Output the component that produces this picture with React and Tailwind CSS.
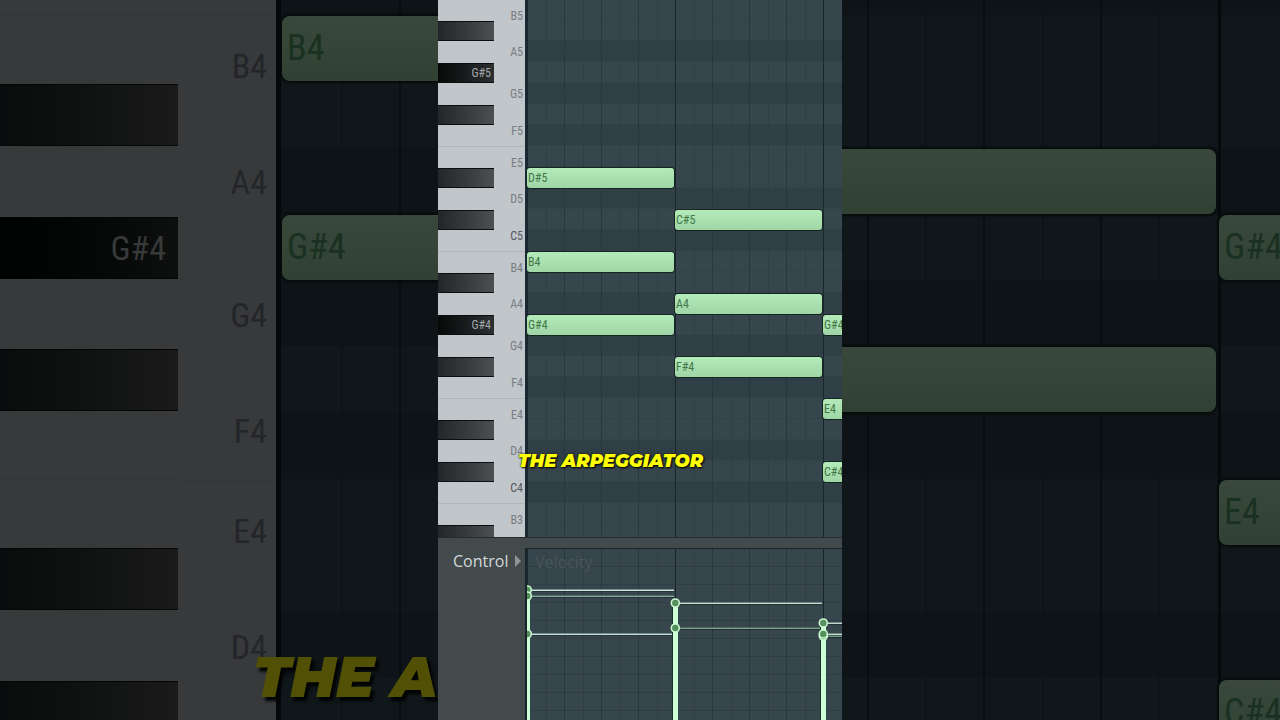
import React from "react";

const LABEL = "font-['Roboto_Condensed','Liberation_Sans_Narrow',Roboto,sans-serif]";
const CAPTION = "font-['Montserrat',Inter,sans-serif] font-black italic whitespace-nowrap";

const PITCHES = ["B", "A#", "A", "G#", "G", "F#", "F", "E", "D#", "D", "C#", "C"];

// Pitch names from the highest one down.
function pitches(firstOctave, start, count) {
  return Array.from({ length: count }, (_, i) => {
    const n = start + i;
    return PITCHES[n % 12] + (firstOctave - Math.floor(n / 12));
  });
}

const ROLL = pitches(5, 0, 26);
const NATURALS = ROLL.filter((p) => !p.includes("#"));
const LARGE = pitches(4, 0, 11);

const isDark = (p) => /^[AGFDC]\d/.test(p);
const isSeam = (p) => /^[BE]\d/.test(p);

const naturalHeight = {
  B: "h-[32px]", A: "h-[42px]", G: "h-[42px]", F: "h-[31px]",
  E: "h-[32px]", D: "h-[42px]", C: "h-[31px]",
};

function BlackKeys() {
  return (
    <div className="w-14 bg-[#c1c6cb]">
      {ROLL.map((p, i) => (
        <div key={p} className={`pt-px ${i === 0 ? "h-[20px]" : "h-[21px]"} ${isSeam(p) && i ? "border-t border-[#b0b6ba]" : ""}`}>
          {p.includes("#") && (
            <button
              aria-label={p}
              className={`block h-[20px] w-full border-y border-[#0c0e0f] pr-[3px] text-right text-[12px] leading-[18px] text-[#a3a7a9] ${
                p.startsWith("G") ? "bg-linear-to-r from-[#070909] to-[#2d3031]" : "bg-linear-to-r from-[#232628] to-[#4d5052]"
              }`}
            >
              {p.startsWith("G") ? p : ""}
            </button>
          )}
        </div>
      ))}
    </div>
  );
}

function WhiteKeys() {
  return (
    <div className="w-[31px] bg-[#c1c6cb]">
      {NATURALS.map((p, i) => (
        <button
          key={p}
          className={`flex w-full items-center justify-end pr-[2px] text-[12px] leading-none ${i === 0 ? "h-[31px]" : naturalHeight[p[0]]} ${
            isSeam(p) && i ? "border-t border-[#b0b6ba]" : ""
          } ${p[0] === "C" ? "text-[#54595d]" : "text-[#777d81]"}`}
        >
          {p}
        </button>
      ))}
    </div>
  );
}

function Bars() {
  return (
    <div className="absolute inset-0 flex overflow-hidden">
      {[0, 1, 2].map((bar) => (
        <div key={bar} className="grid w-[148px] shrink-0 grid-cols-8">
          {Array.from({ length: 8 }, (_, i) => (
            <span
              key={i}
              className={i === 0 ? "border-l border-[#1a262d]" : i % 2 ? "border-l border-[#313e46]" : "border-l border-[#28363e]"}
            />
          ))}
        </div>
      ))}
    </div>
  );
}

const NOTES = [
  { name: "D#5", place: "left-0 top-[168px]" },
  { name: "B4", place: "left-0 top-[252px]" },
  { name: "G#4", place: "left-0 top-[315px]" },
  { name: "C#5", place: "left-[148px] top-[210px]" },
  { name: "A4", place: "left-[148px] top-[294px]" },
  { name: "F#4", place: "left-[148px] top-[357px]" },
  { name: "G#4", place: "left-[296px] top-[315px]" },
  { name: "E4", place: "left-[296px] top-[399px]" },
  { name: "C#4", place: "left-[296px] top-[462px]" },
];

function PianoRoll() {
  return (
    <section aria-label="Piano roll" className={`flex h-[537px] shrink-0 overflow-hidden ${LABEL}`}>
      <BlackKeys />
      <WhiteKeys />
      <div className="relative flex-1 overflow-hidden border-l-2 border-[#1a2a31]">
        {ROLL.map((p, i) => (
          <div
            key={p}
            className={`${i === 0 ? "h-[20px]" : "h-[21px]"} ${isDark(p) ? "bg-[#303e46]" : "bg-[#37454d]"} border-b border-[#334149]`}
          />
        ))}
        <Bars />
        {NOTES.map((n) => (
          <div
            key={n.name + n.place}
            className={`absolute h-[20px] w-[147px] rounded-[3px] bg-linear-to-b from-[#b4ebba] to-[#a0d5a6] pl-px text-[12px] leading-[20px] text-[#42774a] shadow-[0_0_0_1px_#14261f] ${n.place}`}
          >
            {n.name}
          </div>
        ))}
      </div>
    </section>
  );
}

const STEMS = [
  { x: 0, top: 41, dots: [41, 47, 85] },
  { x: 148, top: 54, dots: [54, 79] },
  { x: 296, top: 74, dots: [87, 74, 85] },
];

const LEVELS = [
  { x: 0, y: 41, c: "#d0e6dc" },
  { x: 0, y: 47, c: "#86a898" },
  { x: 0, y: 85, c: "#c5dfe0" },
  { x: 148, y: 54, c: "#c3dccd" },
  { x: 148, y: 79, c: "#7da08c" },
  { x: 296, y: 74, c: "#c3dccd" },
  { x: 296, y: 85, c: "#c3dccd" },
  { x: 296, y: 87, c: "#6f9c80" },
];

function VelocityChart() {
  return (
    <svg role="img" aria-label="Note velocities" className="absolute inset-0 h-full w-full">
      {LEVELS.map((l) => (
        <g key={`${l.x}-${l.y}`}>
          <rect x={l.x} y={l.y - 1} width="147" height="3" fill="#1d2b32" opacity="0.7" />
          <rect x={l.x} y={l.y - 0.5} width="147" height="1.5" fill={l.c} />
        </g>
      ))}
      {STEMS.map((s) => (
        <g key={s.x}>
          <rect x={s.x - 3} y={s.top} width="6" height="2000" fill="#1d3029" />
          <rect x={s.x - 2} y={s.top} width="5" height="2000" fill="#ccffd5" />
          {s.dots.map((y) => (
            <circle key={y} cx={s.x + 0.3} cy={y} r="4" fill="#568f5e" stroke="#c8f8d0" strokeWidth="1.6" />
          ))}
        </g>
      ))}
    </svg>
  );
}

function ControlPanel() {
  return (
    <section
      aria-label="Control lane"
      className="flex flex-1 overflow-hidden border-t border-[#252d30] bg-[#424a4c] pt-[10px] font-['Open_Sans','Noto_Sans',sans-serif] text-[16px] leading-[26px]"
    >
      <div className="w-[87px] pl-[15px]">
        <button className="flex items-center gap-[7px] font-medium text-[#d3d8da]">
          Control
          <svg aria-hidden="true" width="6" height="12" viewBox="0 0 6 12" className="shrink-0">
            <path d="M0 0L6 6L0 12Z" fill="#8e9698" />
          </svg>
        </button>
      </div>
      <div className="relative flex-1 overflow-hidden border-t border-l-2 border-[#1a252b] bg-[#37454d]">
        <div className="absolute inset-0 bg-[repeating-linear-gradient(to_bottom,transparent_0px,transparent_17px,#303d45_17px,#303d45_18px)]" />
        <Bars />
        <span className="relative pl-2 font-medium text-[#47555b]">Velocity</span>
        <VelocityChart />
      </div>
    </section>
  );
}

const LARGE_ROW = ["h-[66px]", "h-[66px]", "h-[67px]"];
const largeNatural = { B: "h-[100px]", A: "h-[133px]", G: "h-[133px]", F: "h-[99px]", E: "h-[100px]", D: "h-[133px]" };
const largeNote =
  "absolute h-[65px] rounded-lg bg-linear-to-b from-[#39483a] to-[#304133] text-[36px] leading-[65px] text-[#1a3020] shadow-[0_0_2px_2px_#060c0b]";

function LargeRows() {
  return (
    <>
      <div className="h-[15px] bg-[#0d1316]" />
      {LARGE.map((p, i) => (
        <div key={p} className={`${LARGE_ROW[i % 3]} ${isDark(p) ? "bg-[#0d1316]" : "bg-[#10171a]"}`} />
      ))}
    </>
  );
}

function LeftBackdrop() {
  return (
    <div aria-hidden="true" className={`relative flex min-w-0 flex-1 overflow-hidden ${LABEL}`}>
      <div className="w-[178px] shrink-0 bg-[#38393b] pt-[15px]">
        {LARGE.map((p, i) => (
          <div key={p} className={`pt-[3px] ${LARGE_ROW[i % 3]} ${isSeam(p) ? "border-t border-[#343537]" : ""}`}>
            {p.includes("#") && (
              <div
                className={`h-[62px] w-full border-y border-[#050606] pr-3 text-right text-[34px] leading-[60px] text-[#383a3a] ${
                  p.startsWith("G") ? "bg-linear-to-r from-[#010202] to-[#0e0f0f]" : "bg-linear-to-r from-[#090b0c] to-[#191a19]"
                }`}
              >
                {p.startsWith("G") ? p : ""}
              </div>
            )}
          </div>
        ))}
      </div>
      <div className="w-[98px] shrink-0 bg-[#38393b] pt-[15px]">
        {["B4", "A4", "G4", "F4", "E4", "D4"].map((p) => (
          <div
            key={p}
            className={`flex items-center justify-end pr-[9px] text-[34px] leading-none text-[#232528] ${largeNatural[p[0]]} ${
              isSeam(p) ? "border-t border-[#343537]" : ""
            }`}
          >
            {p}
          </div>
        ))}
      </div>
      <div className="relative min-w-0 flex-1 overflow-hidden border-l-[5px] border-[#04080a]">
        <LargeRows />
        <div className="absolute inset-0 flex overflow-hidden">
          <span className="w-[62px] shrink-0 border-r-2 border-[#0c1215]" />
          <span className="w-[58px] shrink-0 border-r-2 border-[#080e10]" />
        </div>
        <div className={`${largeNote} top-[16px] left-px w-[466px] pl-[5px]`}>B4</div>
        <div className={`${largeNote} top-[215px] left-px w-[466px] pl-[5px]`}>G#4</div>
      </div>
      <span className={`absolute top-[642px] left-[253px] text-[57px] leading-[70px] text-[#525005] [text-shadow:3px_4px_3px_#020303] ${CAPTION}`}>
        THE ARPEGGIATOR
      </span>
    </div>
  );
}

function RightBackdrop() {
  return (
    <div aria-hidden="true" className={`relative min-w-0 flex-1 overflow-hidden ${LABEL}`}>
      <LargeRows />
      <div className="absolute inset-0 flex overflow-hidden">
        <span className="w-[27px] shrink-0 border-r-2 border-[#080e10]" />
        <div className="grid w-[352px] shrink-0 grid-cols-6 border-r-3 border-[#050a0b]">
          {Array.from({ length: 6 }, (_, i) => (
            <span key={i} className={i === 5 ? "" : i % 2 ? "border-r-2 border-[#080e10]" : "border-r-2 border-[#0c1215]"} />
          ))}
        </div>
      </div>
      <div className={`${largeNote} top-[149px] left-[-92px] w-[466px]`} />
      <div className={`${largeNote} top-[347px] left-[-92px] w-[466px]`} />
      <div className={`${largeNote} top-[215px] left-[377px] w-[466px] pl-[5px]`}>G#4</div>
      <div className={`${largeNote} top-[480px] left-[377px] w-[466px] pl-[5px]`}>E4</div>
      <div className={`${largeNote} top-[680px] left-[377px] w-[466px] pl-[5px]`}>C#4</div>
    </div>
  );
}

export default function App() {
  return (
    <div className="flex h-screen overflow-hidden bg-[#0d1316]">
      <LeftBackdrop />
      <main className="relative flex w-[404px] shrink-0 flex-col overflow-hidden">
        <PianoRoll />
        <ControlPanel />
        <p className={`absolute top-[449px] left-[80px] text-[18px] leading-[24px] text-[#ffff05] [text-shadow:1px_1px_2px_#000,0_0_2px_#1a1a00] ${CAPTION}`}>
          THE ARPEGGIATOR
        </p>
      </main>
      <RightBackdrop />
    </div>
  );
}
